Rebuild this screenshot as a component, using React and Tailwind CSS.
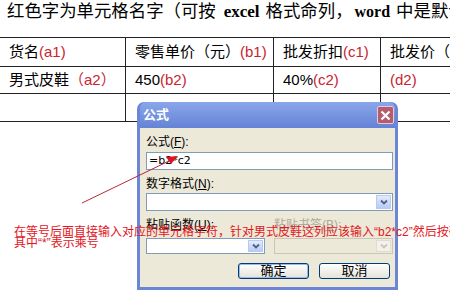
import React from 'react'

const cjk = { fontFamily: '"Liberation Sans", "Noto Sans CJK SC", sans-serif' }
const serif = { fontFamily: '"Liberation Serif", serif' }

function Chevron({ disabled }) {
  return (
    <div
      className={
        'w-[15px] h-full flex items-center justify-center border ' +
        (disabled
          ? 'border-[#e0ddd0] bg-[#f3f1ea]'
          : 'border-[#b9c9ef] bg-gradient-to-b from-[#e3ebfd] to-[#b8cbf5]')
      }
    >
      <svg width="8" height="6" viewBox="0 0 8 6">
        <path
          d="M1 1.5 L4 4.5 L7 1.5"
          fill="none"
          stroke={disabled ? '#c9c7ba' : '#4d6185'}
          strokeWidth="1.8"
        />
      </svg>
    </div>
  )
}

function Select({ w, h, disabled }) {
  return (
    <div
      className={
        'flex justify-end p-[1px] border ' +
        (disabled ? 'border-[#c9c7ba] bg-[#ece9d8]' : 'border-[#7f9db9] bg-white')
      }
      style={{ width: w, height: h }}
    >
      <Chevron disabled={disabled} />
    </div>
  )
}

function Cell({ children, w }) {
  return (
    <div
      className="flex items-center pl-[9px] border-r border-b border-[#222] whitespace-nowrap"
      style={{ width: w }}
    >
      {children}
    </div>
  )
}

export default function App() {
  const red = 'text-[#c8242e]'
  return (
    <div className="relative w-[450px] h-[300px] overflow-hidden bg-white text-black" style={cjk}>
      <div className="h-[37px] pl-[7px] pt-[1px] text-[17.4px] leading-[20px] whitespace-nowrap flex items-baseline">
        <span>红色字为单元格名字（可按</span>
        <b className="ml-[8px] font-bold text-[17px]" style={serif}>excel</b>
        <span className="ml-[6px]">格式命列，</span>
        <b className="ml-[2px] font-bold text-[16px]" style={serif}>word</b>
        <span className="ml-[6px]">中是默认的</span>
      </div>

      <div className="w-[600px] border-t border-[#222] text-[15px]">
        <div className="flex h-[29px]">
          <Cell w={126}>货名<span className={red}>(a1)</span></Cell>
          <Cell w={148}>零售单价（元）<span className={red}>(b1)</span></Cell>
          <Cell w={107}>批发折扣<span className={red}>(c1)</span></Cell>
          <Cell w={219}>批发价（元）<span className={red}>(d1)</span></Cell>
        </div>
        <div className="flex h-[27px]">
          <Cell w={126}>男式皮鞋<span className={red}>（a2）</span></Cell>
          <Cell w={148}>450<span className={red}>(b2)</span></Cell>
          <Cell w={107}>40%<span className={red}>(c2)</span></Cell>
          <Cell w={219}><span className={red}>(d2)</span></Cell>
        </div>
        <div className="flex h-[28px]">
          <Cell w={126} />
          <Cell w={148} />
          <Cell w={107} />
          <Cell w={219} />
        </div>
      </div>

      {/* dialog window */}
      <div className="absolute left-[137px] top-[102px] w-[261px] h-[188px] flex flex-col rounded-t-[7px] bg-[#6a86d4] px-[3px] pb-[3px] text-[12px]">
        <div className="h-[26px] shrink-0 flex items-center justify-between pl-[3px] pr-[1px] rounded-t-[6px] bg-gradient-to-b from-[#8aa6ea] to-[#6583d6]">
          <span className="text-white font-bold text-[13px]">公式</span>
          <div className="w-[17px] h-[18px] flex items-center justify-center rounded-[2px] border border-[#e6c9d2] bg-[#b45d6e]">
            <svg width="11" height="11" viewBox="0 0 11 11">
              <path d="M1.5 1.5 L9.5 9.5 M9.5 1.5 L1.5 9.5" stroke="white" strokeWidth="2.2" />
            </svg>
          </div>
        </div>
        <div className="flex-1 bg-[#ece9d8] pl-[6px] pt-[6px] flex flex-col">
          <div className="leading-[16px]">公式(<u>F</u>):</div>
          <div className="mt-[2px] w-[247px] h-[18px] border border-[#7f9db9] bg-white pl-[2px] leading-[16px]" style={{ fontFamily: '"DejaVu Sans", sans-serif', fontSize: '11px' }}>
            =b2*c2
          </div>
          <div className="mt-[6px] leading-[16px]">数字格式(<u>N</u>):</div>
          <div className="mt-[1px]">
            <Select w={247} h={18} />
          </div>
          <div className="mt-[6px] leading-[16px] flex">
            <span className="w-[128px]">粘贴函数(<u>U</u>):</span>
            <span className="text-[#aca899]">粘贴书签(<u>B</u>):</span>
          </div>
          <div className="mt-[5px] flex gap-[9px]">
            <Select w={119} h={16} />
            <Select w={119} h={16} disabled />
          </div>
          <div className="mt-[9px] flex gap-[10px] pl-[92px]">
            <div className="w-[71px] h-[16px] rounded-[3px] border border-[#003c74] bg-gradient-to-b from-white to-[#e4e2d8] flex items-center justify-center text-[13px] shadow-[inset_0_0_0_1px_#9bb8ef]">
              确定
            </div>
            <div className="w-[71px] h-[16px] rounded-[3px] border border-[#003c74] bg-gradient-to-b from-white to-[#e4e2d8] flex items-center justify-center text-[13px]">
              取消
            </div>
          </div>
        </div>
      </div>

      {/* annotation arrow */}
      <svg className="absolute left-0 top-0 pointer-events-none" width="450" height="300">
        <line x1="82" y1="203" x2="171" y2="160" stroke="#b8283a" strokeWidth="1" />
        <polygon points="166,157 178,156 171,164" fill="#e0141e" />
      </svg>

      {/* annotation text */}
      <div className="absolute left-[14px] top-[227px] text-[12px] leading-[11px] text-[#e3161c] whitespace-nowrap">
        <div>在等号后面直接输入对应的单元格字符，针对男式皮鞋这列应该输入“b2*c2”然后按确定</div>
        <div>其中“*”表示乘号</div>
      </div>
    </div>
  )
}
